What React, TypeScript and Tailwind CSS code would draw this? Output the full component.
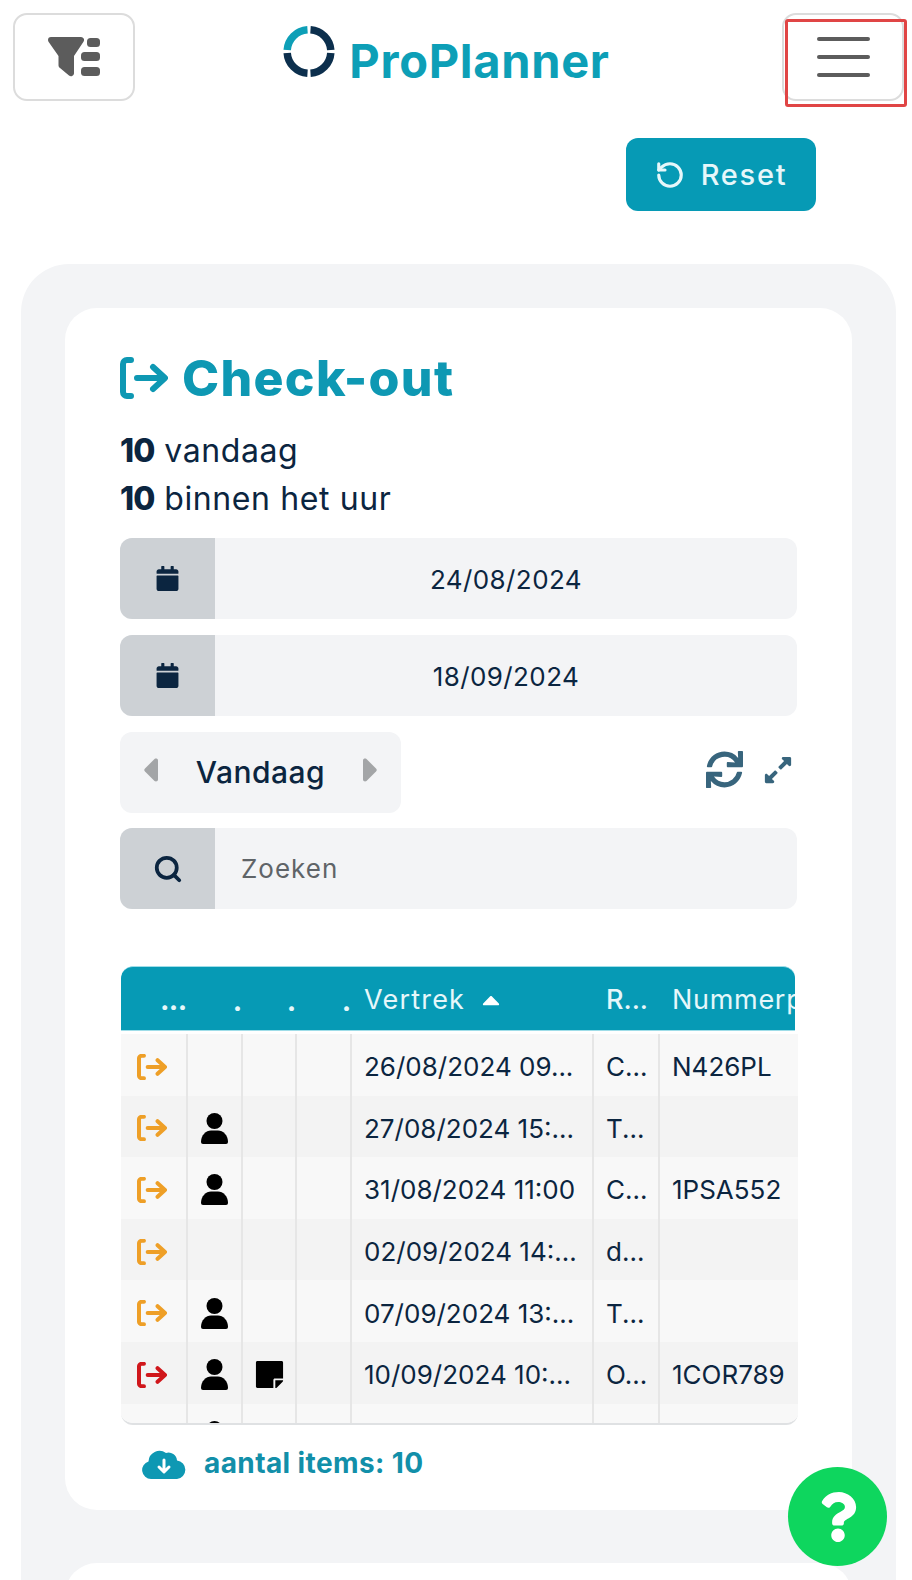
import React from 'react';
import { RotateCcw, Search } from 'lucide-react';
import { FaCalendar, FaCaretUp, FaExpandAlt, FaQuestion, FaStickyNote, FaSync } from 'react-icons/fa';

const CheckoutIcon: React.FC<{ className?: string; strokeWidth?: number }> = ({ className, strokeWidth = 6 }) => (
  <svg viewBox="0 0 48 42" fill="none" stroke="currentColor" strokeLinecap="round" strokeLinejoin="round" strokeWidth={strokeWidth} className={className}>
    <path d="M11 3H7A4 4 0 0 0 3 7v28a4 4 0 0 0 4 4h4" />
    <path d="M17 21h27M33 10l12 11-12 11" />
  </svg>
);

const Logo = () => (
  <div className="flex items-end gap-[14px]">
    <svg viewBox="0 0 52 52" className="h-[53px] w-[52px]" fill="none" strokeWidth="7.5">
      <path d="M4.2 24.5A21.8 21.8 0 0 1 24.5 4.2" stroke="#0d9fb7" />
      <path d="M27.500 4.2A21.8 21.8 0 0 1 47.8 24.5" stroke="#0c2f4d" />
      <path d="M47.8 27.500A21.8 21.8 0 0 1 27.500 47.8" stroke="#0c2f4d" />
      <path d="M24.5 47.8A21.8 21.8 0 0 1 4.2 27.500" stroke="#0c2f4d" />
    </svg>
    <span className="mb-[-4px] text-[47px] leading-[42px] font-bold tracking-[0.7px] text-[#0d9fb7]">ProPlanner</span>
  </div>
);

const FilterIcon = () => (
  <svg viewBox="0 0 53 40" className="h-[40px] w-[53px]" fill="#5c5c5c">
    <path d="M0 3a3 3 0 0 1 3-3h30a3 3 0 0 1 2.500 4.700L26 19v17.500a3 3 0 0 1-5 2L12 31a3 3 0 0 1-1.500-2.500V19L.5 4.700A3 3 0 0 1 0 3Z" />
    <rect x="39" y="1" width="13" height="9" rx="3.500" />
    <rect x="33" y="15" width="19" height="9" rx="3.500" />
    <rect x="33" y="30" width="19" height="9" rx="3.500" />
  </svg>
);

const PersonIcon = () => (
  <svg viewBox="0 0 27 31" className="h-[31px] w-[27px]" fill="#000">
    <circle cx="13.5" cy="8" r="8" />
    <path d="M0 29c0-7 5-11.500 10-11.500h7c5 0 10 4.500 10 11.500a2 2 0 0 1-2 2H2a2 2 0 0 1-2-2Z" />
  </svg>
);

const CloudIcon = () => (
  <svg viewBox="0 0 44 31" className="h-[31px] w-[44px]">
    <path d="M9 31a9 9 0 0 1-2.500-17.600A11 11 0 0 1 24 5a8.500 8.500 0 0 1 11 7.500 9.300 9.300 0 0 1 0 18.500Z" fill="#0e98b3" />
    <path d="M22 12v11M17 19l5 5 5-5" fill="none" stroke="#fff" strokeWidth="3" strokeLinecap="round" strokeLinejoin="round" />
  </svg>
);

const Caret: React.FC<{ flip?: boolean }> = ({ flip }) => (
  <svg viewBox="0 0 14 24" className={`mt-[-6px] h-[24px] w-[14px] ${flip ? 'rotate-180' : ''}`} fill="#a3a5a7">
    <path d="M1 10.500 10.500 1c1.200-1 3.500-.5 3.500 1.500v19c0 2-2.300 2.500-3.500 1.500L1 13.500c-1-1-1-2 0-3Z" />
  </svg>
);

const DateField: React.FC<{ value: string }> = ({ value }) => (
  <div className="flex h-[81px] overflow-hidden rounded-xl bg-[#f3f4f6]">
    <div className="flex w-[95px] items-center justify-center bg-[#cdd1d5] text-[#0b2540]">
      <FaCalendar className="text-[25px]" />
    </div>
    <div className="flex flex-1 items-center justify-center pt-[2px] text-[26px] tracking-[0.4px] text-[#0b2540]">{value}</div>
  </div>
);

type Row = {
  status: string;
  person?: boolean;
  note?: boolean;
  date: string;
  r: string;
  num: string;
};

const rows: Row[] = [
  { status: 'text-[#ee9f27]', date: '26/08/2024 09...', r: 'C...', num: 'N426PL' },
  { status: 'text-[#ee9f27]', person: true, date: '27/08/2024 15:...', r: 'T...', num: '' },
  { status: 'text-[#ee9f27]', person: true, date: '31/08/2024 11:00', r: 'C...', num: '1PSA552' },
  { status: 'text-[#ee9f27]', date: '02/09/2024 14:...', r: 'd...', num: '' },
  { status: 'text-[#ee9f27]', person: true, date: '07/09/2024 13:...', r: 'T...', num: '' },
  { status: 'text-[#d0171b]', person: true, note: true, date: '10/09/2024 10:...', r: 'O...', num: '1COR789' },
  { status: '', person: true, note: true, date: '', r: '', num: '' },
];

const HeaderDots: React.FC<{ width: string }> = ({ width }) => (
  <div className={`flex shrink-0 justify-end pt-[6px] pr-[1px] ${width}`}>
    <span className="w-[9px] overflow-hidden text-[24px] leading-none font-black text-[#e6f7fa]">..</span>
  </div>
);

const DataTable = () => (
  <div className="mt-[57px] ml-[1px] h-[459px] w-[677px] overflow-hidden rounded-xl border-b-2 border-[#dfe1e3]">
    <div className="flex h-[65px] w-[674px] items-center overflow-hidden rounded-t-xl border-y border-[#9fdde8] bg-[#069ab5] pt-[3px] text-[27px] tracking-[1.2px] whitespace-nowrap text-[#e6f7fa]">
      <div className="flex w-[67px] shrink-0 justify-end pt-[3px] pr-[1px]">
        <span className="text-[24px] leading-none font-black tracking-[0px]">...</span>
      </div>
      <HeaderDots width="w-[55px]" />
      <HeaderDots width="w-[54px]" />
      <HeaderDots width="w-[55px]" />
      <div className="flex w-[242px] shrink-0 items-center pl-[12px]">
        Vertrek
        <FaCaretUp className="ml-[12px] text-[28px] text-white" />
      </div>
      <div className="w-[66px] shrink-0 pl-[12px] font-medium tracking-[0px]">R...</div>
      <div className="shrink-0 pl-[12px] tracking-[0.7px]">Nummerplaat</div>
    </div>
    <div className="mt-[3px]">
      {rows.map((row, i) => (
        <div
          key={i}
          className={`flex h-[61.6px] items-stretch text-[26px] whitespace-nowrap text-[#0b2540] ${i % 2 === 0 ? 'bg-[#f8f8f8]' : 'bg-[#f3f3f3]'}`}
        >
          <div className="flex w-[67px] items-center border-r-2 border-[#e6e6e6] pt-[4px] pl-[16px]">
            {row.status && <CheckoutIcon className={`h-[26px] w-[30px] ${row.status}`} strokeWidth={6.5} />}
          </div>
          <div className="flex w-[55px] items-center justify-center border-r-2 border-[#e6e6e6] pt-[4px]">
            {row.person && <PersonIcon />}
          </div>
          <div className="flex w-[54px] items-center justify-center border-r-2 border-[#e6e6e6] pt-[4px] text-[31px] text-black">
            {row.note && <FaStickyNote />}
          </div>
          <div className="w-[55px] border-r-2 border-[#e6e6e6]" />
          <div className="flex w-[242px] items-center border-r-2 border-[#e6e6e6] pt-[4px] pl-[12px]">{row.date}</div>
          <div className="flex w-[66px] items-center border-r-2 border-[#e6e6e6] pt-[4px] pl-[12px]">{row.r}</div>
          <div className="flex items-center pt-[4px] pl-[12px]">{row.num}</div>
        </div>
      ))}
    </div>
  </div>
);

export default function App() {
  return (
    <div className="relative h-[1580px] w-full overflow-hidden bg-white font-['Inter',sans-serif]">
      <header className="flex items-start justify-between pt-[13px] pr-[8px] pl-[13px]">
        <button className="flex h-[88px] w-[122px] items-center justify-center rounded-[14px] border-2 border-[#dcdcdc] bg-white">
          <FilterIcon />
        </button>
        <div className="pt-[12px] pr-[24px]">
          <Logo />
        </div>
        <button className="flex h-[88px] w-[122px] flex-col items-center justify-center gap-[14px] rounded-[14px] border-2 border-[#dcdcdc] bg-white">
          <span className="h-[4px] w-[53px] rounded-full bg-[#5c5c5c]" />
          <span className="h-[4px] w-[53px] rounded-full bg-[#5c5c5c]" />
          <span className="h-[4px] w-[53px] rounded-full bg-[#5c5c5c]" />
        </button>
      </header>

      {/* annotation box from the screenshot */}
      <div className="absolute top-[19px] left-[785px] h-[88px] w-[122px] rounded-[3px] border-[3px] border-[#e04545]" />

      <div className="mt-[37px] flex justify-end pr-[96px]">
        <button className="flex h-[73px] w-[190px] items-center justify-center gap-[16px] rounded-xl bg-[#069ab5] text-[29px] font-medium tracking-[1.7px] text-[#e6f7fa]">
          <RotateCcw className="h-[30px] w-[30px]" strokeWidth={2.5} />
          Reset
        </button>
      </div>

      <main className="mt-[53px] mr-[16px] ml-[21px] rounded-[48px] bg-[#f3f4f6] px-[44px] pt-[44px]">
        <section className="rounded-[32px] bg-white pt-[45px] pr-[55px] pb-[26px] pl-[55px]">
          <h1 className="flex items-center gap-[14px] text-[50px] leading-[50px] font-extrabold tracking-[1.3px] text-[#0e98b3]">
            <CheckoutIcon className="h-[42px] w-[48px]" />
            Check-out
          </h1>
          <div className="mt-[24px] text-[32px] leading-[48px] tracking-[0.6px] text-[#0b2540]">
            <p><b className="font-extrabold tracking-[-0.8px]">10</b> vandaag</p>
            <p><b className="font-extrabold tracking-[-0.8px]">10</b> binnen het uur</p>
          </div>
          <div className="mt-[15px] flex flex-col gap-[16px]">
            <DateField value="24/08/2024" />
            <DateField value="18/09/2024" />
          </div>
          <div className="mt-[16px] flex items-center justify-between">
            <div className="flex h-[81px] w-[281px] items-center justify-between rounded-xl bg-[#f3f4f6] px-[24px] text-[30px] font-medium tracking-[0.5px] text-[#0b2540]">
              <Caret />
              Vandaag
              <Caret flip />
            </div>
            <div className="mb-[6px] flex items-center gap-[20px] pr-[4px] text-[#38657d]">
              <FaSync className="text-[37px]" />
              <FaExpandAlt className="text-[30px]" />
            </div>
          </div>
          <div className="mt-[15px] flex h-[81px] overflow-hidden rounded-xl bg-[#f3f4f6]">
            <div className="flex w-[95px] items-center justify-center bg-[#cdd1d5] text-[#0b2540]">
              <Search className="h-[30px] w-[30px]" strokeWidth={3} />
            </div>
            <div className="flex flex-1 items-center pl-[26px] text-[26px] tracking-[1px] text-[#5f6468]">Zoeken</div>
          </div>

          <DataTable />

          <div className="mt-[17px] flex items-center gap-[18px] pl-[22px] text-[28px] font-bold tracking-[0.4px] text-[#128fa9]">
            <CloudIcon />
            aantal items: 10
          </div>
        </section>
        <div className="mt-[53px] h-[200px] rounded-t-[32px] bg-white" />
      </main>

      <button className="absolute top-[1467px] left-[788px] flex h-[99px] w-[99px] items-center justify-center rounded-full bg-[#0ed65e] text-white">
        <FaQuestion className="text-[50px]" />
      </button>
    </div>
  );
}
